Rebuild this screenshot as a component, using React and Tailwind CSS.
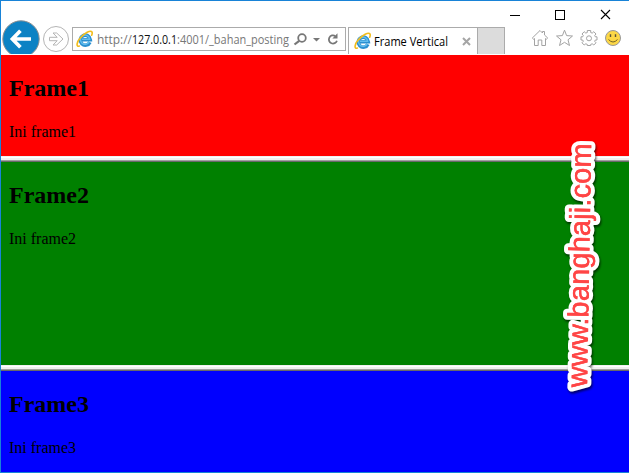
const IeLogo = () => (
  <svg width="18" height="18" viewBox="0 0 18 18" className="shrink-0">
    <path d="M13.9 12.2 A5 5 0 1 1 14.3 9.8 H6" fill="none" stroke="#2b8fd0" strokeWidth="3.6" />
    <path d="M13.2 11.6 A4.6 4.6 0 1 1 13.6 9.2 H6" fill="none" stroke="#62bdee" strokeWidth="1.5" />
    <path d="M3.4 16 C0 17.6 .4 12 4.2 8 C8.5 3 14.5 -.2 16 2 C16.5 2.9 16.2 4 15.7 5.2" fill="none" stroke="#f2bd1d" strokeWidth="1.6" strokeLinecap="round" />
  </svg>
);

const Frame = ({ title, text, className }) => (
  <section className={`shrink-0 overflow-hidden pl-2 font-['Liberation_Serif',serif] text-black ${className}`}>
    <h2 className="text-[24px] leading-[27px] font-bold">{title}</h2>
    <p className="mt-[21px] text-[16px] leading-[18px]">{text}</p>
  </section>
);

const Divider = () => (
  <div className="flex h-[6px] shrink-0 flex-col bg-[#f0f0f0]">
    <div className="h-px bg-[#f0f0f0]" />
    <div className="h-px bg-white" />
    <div className="flex-1" />
    <div className="h-px bg-[#a0a0a0]" />
    <div className="h-px bg-[#696969]" />
  </div>
);

export default function App() {
  return (
    <div className="relative flex h-[473px] w-[629px] flex-col overflow-hidden border-t border-b border-l border-[#1883d7] bg-white font-['Open_Sans','Noto_Sans',sans-serif]">
      <header className="flex h-[54px] shrink-0 flex-col">
        <div className="flex h-[26px] shrink-0 items-center justify-end pr-[18px]">
          <svg width="103" height="12" viewBox="0 0 103 12" fill="none" stroke="#000" shapeRendering="crispEdges">
            <path d="M2 7.5H12" />
            <rect x="47.5" y="2.5" width="9" height="9" />
            <path d="M93 2L102 11M102 2L93 11" shapeRendering="auto" strokeWidth="1.1" />
          </svg>
        </div>
        <div className="flex h-7 shrink-0">
          <svg width="71" height="34" viewBox="0 0 71 34" className="-mt-[7px] shrink-0" fill="none">
            <circle cx="20" cy="19" r="18.2" fill="#0c82c4" stroke="#8b8f92" />
            <path d="M30 19H12M19.4 10.8L11.4 19L19.4 27.2" stroke="#fff" strokeWidth="3.7" />
            <circle cx="55" cy="19" r="12.5" fill="#fff" stroke="#b5b5b5" />
            <path d="M48.5 17.3H56.2L52 13H55.7L62 19L55.7 25H52L56.2 20.7H48.5Z" stroke="#b5b5b5" />
          </svg>
          <div className="flex h-6 w-[274px] shrink-0 items-center border border-[#ababab] bg-white pl-[3px]">
            <IeLogo />
            <svg width="194" height="20" className="ml-[3px] shrink-0" fontSize="11.8" fill="#777">
              <text y="15" textLength="35" lengthAdjust="spacingAndGlyphs">http://</text>
              <text x="35" y="15" fill="#111" textLength="45" lengthAdjust="spacingAndGlyphs">127.0.0.1</text>
              <text x="80" y="15" textLength="32" lengthAdjust="spacingAndGlyphs">:4001/</text>
              <text x="112" y="15" textLength="80" lengthAdjust="spacingAndGlyphs">_bahan_posting</text>
            </svg>
            <svg width="48" height="18" viewBox="0 0 48 18" className="ml-[2px] shrink-0" fill="none" stroke="#777">
              <circle cx="9" cy="8" r="3.8" strokeWidth="1.8" />
              <path d="M6.2 10.8L1.5 14.5" strokeWidth="2.2" />
              <path d="M20 8H27L23.5 11.5Z" fill="#777" stroke="none" />
              <path d="M43.9 10.7A4.1 4.1 0 1 1 42.2 6" strokeWidth="1.8" />
              <path d="M44.5 3.3V8.5H39.4Z" fill="#777" stroke="none" />
            </svg>
          </div>
          <div className="ml-[2px] flex h-[27px] w-[130px] shrink-0 items-center border border-b-0 border-[#ababab] bg-white pl-[5px]">
            <IeLogo />
            <svg width="76" height="20" className="ml-[2px] shrink-0" fontSize="12" fill="#000">
              <text y="15" textLength="74" lengthAdjust="spacingAndGlyphs">Frame Vertical</text>
            </svg>
            <svg width="9" height="9" viewBox="0 0 9 9" className="ml-[12px] shrink-0" stroke="#a5a5a5" strokeWidth="2">
              <path d="M1 1L8 8M8 1L1 8" />
            </svg>
          </div>
          <div className="h-[27px] w-[27px] shrink-0 border-t border-r border-[#ababab] bg-[#dcdcdc]" />
          <svg width="92" height="20" viewBox="0 0 92 20" className="mt-[1px] ml-[26px] shrink-0" fill="none" stroke="#a3a3a3">
            <path d="M1.3 10L9 2.5L11.5 5V3.5H13.5V7L16.7 10L15.4 11.2L14.5 10.5V17.5H10.8V12H7.2V17.5H3.5V10.5L2.5 11.2Z" />
            <path d="M33.5 2.2L35.6 7.6L41.5 8L37 11.8L38.5 17.5L33.5 14.3L28.5 17.5L30 11.8L25.5 8L31.4 7.6Z" />
            <path d="M56.3 4.5V2.5H59.7V4.5L61.2 5.1L62.8 3.7L65 6L63.7 7.5L64.3 8.8H66V12H64.3L63.7 13.3L65 14.8L62.8 17L61.2 15.8L59.7 16.4V17.5H56.3V16.4L54.8 15.8L53.2 17L51 14.8L52.3 13.3L51.7 12H50V8.8H51.7L52.3 7.5L51 6L53.2 3.7L54.8 5.1Z" />
            <circle cx="58" cy="10.3" r="2.5" />
            <circle cx="82" cy="10" r="7.5" fill="#fcd746" stroke="#999" />
            <path d="M79.5 6.2V9M84.5 6.2V9" stroke="#59533b" strokeWidth="1.4" />
            <path d="M77.5 11.5Q82 16.5 86.5 11.5" stroke="#756424" />
          </svg>
        </div>
      </header>
      <Frame title="Frame1" text="Ini frame1" className="h-[101px] bg-[#ff0000] pt-5" />
      <Divider />
      <Frame title="Frame2" text="Ini frame2" className="h-[203px] bg-[#008000] pt-5" />
      <Divider />
      <Frame title="Frame3" text="Ini frame3" className="h-[101px] bg-[#0000ff] pt-5" />
      <svg width="80" height="270" viewBox="550 130 80 270" className="absolute top-[129px] left-[549px] font-['Liberation_Sans',sans-serif] drop-shadow-[1px_2px_1px_rgba(0,0,0,0.6)]">
        <text transform="translate(587 387.5) rotate(-89)" fontSize="29" textLength="244" fill="#ff4545" stroke="#fff" strokeWidth="8.5" strokeLinejoin="round" paintOrder="stroke">
          www.banghaji.com
        </text>
        <text transform="translate(587 387.5) rotate(-89)" fontSize="29" textLength="244" fill="#ff4545" stroke="#ff4545" strokeWidth=".4">
          www.banghaji.com
        </text>
      </svg>
    </div>
  );
}
